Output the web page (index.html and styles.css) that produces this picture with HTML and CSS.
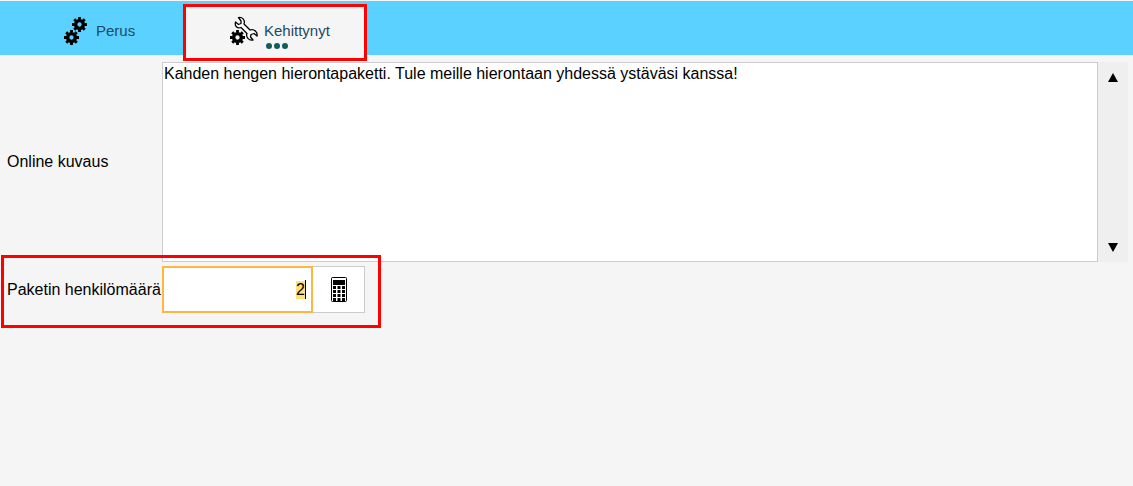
FILE: index.html
```html
<!DOCTYPE html>
<html lang="fi">
<head>
<meta charset="utf-8">
<title>Kehittynyt</title>
<link rel="stylesheet" href="styles.css">
</head>
<body>
<svg class="defs" aria-hidden="true">
  <symbol id="gear" viewBox="-8 -8 16 16">
    <g fill="none" stroke="#000">
      <circle r="4.1" stroke-width="3.6"/>
      <path stroke-width="3" d="M0-8V-5M0 8V5M-8 0H-5M8 0H5M-5.600-5.600-3.500-3.500M5.600 5.600 3.500 3.500M-5.600 5.600-3.500 3.500M5.600-5.600 3.500-3.500"/>
    </g>
  </symbol>
</svg>
<nav class="tabs">
  <button class="tab tab-basic" type="button">
    <svg class="tab-icon" viewBox="0 0 28 30" aria-hidden="true">
      <use href="#gear" x="10" y="1" width="15" height="15"/>
      <use href="#gear" x="2" y="14" width="15" height="15"/>
    </svg>
    <span class="tab-label">Perus</span>
  </button>
  <div class="tab-frame">
    <button class="tab tab-active" type="button">
      <svg class="tab-icon" viewBox="0 0 28 30" aria-hidden="true">
        <use href="#gear" x="0" y="14" width="15" height="15"/>
        <path fill="#fff" stroke="#000" stroke-width="1.3" stroke-linejoin="round" d="M8.500 1.500C12 .5 15.500 4 14 8L20 14C24 12.500 28 16 27 20L24 17.500 21 18.500 20.500 21 23 24C19 25 15.500 21 17 17.500L11 11.500C7 13 4.500 10 5.500 6L8.500 8.500 11 7.500 11 5Z"/>
      </svg>
      <span class="tab-label">Kehittynyt</span>
      <span class="dots" aria-hidden="true"><i></i><i></i><i></i></span>
    </button>
    <span class="marker"></span>
  </div>
</nav>
<main class="form">
  <label class="label" for="desc">Online kuvaus</label>
  <div class="editor">
    <textarea class="text" id="desc">Kahden hengen hierontapaketti. Tule meille hierontaan yhdessä ystäväsi kanssa!</textarea>
    <div class="scroll">
      <button class="arrow" type="button" aria-label="Ylös"><svg viewBox="0 0 10 9"><path d="M5 0 10 9H0Z"/></svg></button>
      <button class="arrow" type="button" aria-label="Alas"><svg viewBox="0 0 10 9"><path d="M0 0H10L5 9Z"/></svg></button>
    </div>
  </div>
  <div class="row">
    <label class="label" for="count">Paketin henkilömäärä</label>
    <div class="number">
      <div class="field"><input class="count" id="count" type="text" value="2"><span class="caret"></span></div>
      <button class="calc" type="button" aria-label="Laskin">
        <svg viewBox="0 0 16 25" aria-hidden="true">
          <rect x=".5" y=".5" width="15" height="24" rx="1" fill="#fff" stroke="#000"/>
          <path d="M2 3H14V8H2Z"/>
          <path stroke="#000" stroke-width="3" stroke-dasharray="3 1.500" d="M2 10.500H14M2 14.500H14M2 18.500H14M2 22.500H14"/>
        </svg>
      </button>
    </div>
    <span class="marker"></span>
  </div>
</main>
<script src="app.js"></script>
</body>
</html>
```
FILE: styles.css
```css
* { box-sizing: border-box; }
body {
  margin: 0;
  padding-top: 1px;
  background: #f5f5f5;
  color: #000;
  font: 16px/20px "Liberation Sans", Arial, sans-serif;
}
button, input, textarea { font: inherit; color: inherit; border: 0; border-radius: 0; padding: 0; }
.defs { position: absolute; width: 0; height: 0; }
.tabs { display: flex; height: 54px; background: #5bd1ff; }
.tab {
  position: relative;
  display: flex;
  align-items: center;
  gap: 6px;
  background: none;
  color: #1c4a66;
  font-size: 15px;
}
.tab-basic { width: 183px; padding: 6px 0 0 62px; }
.tab-icon { width: 28px; height: 30px; }
.tab-frame { position: relative; width: 184px; margin: 3px 0 -6px; }
.tab-active {
  width: 100%;
  height: 54px;
  margin-top: 2px;
  padding: 0 0 4px 47px;
  background: #f5f5f5;
}
.dots { position: absolute; left: 83px; bottom: 11px; display: flex; gap: 2px; }
.dots i { width: 6px; height: 6px; border-radius: 50%; background: #115e59; }
.marker { position: absolute; inset: 0; border: 3px solid #f00; pointer-events: none; }
.form {
  display: grid;
  grid-template-columns: 162px 1fr;
  align-items: center;
  padding: 7px 5px 0 0;
}
.label { padding-left: 7px; white-space: nowrap; }
.editor { display: flex; height: 200px; background: #efefef; }
.text {
  flex: 1;
  height: 100%;
  padding: 1px;
  border: 1px solid #ccc;
  background: #fff;
  resize: none;
  outline: none;
}
.scroll {
  display: flex;
  flex-direction: column;
  justify-content: space-between;
  width: 30px;
}
.arrow { height: 30px; background: none; }
.arrow svg { display: block; width: 10px; height: 9px; margin: auto; }
.row {
  position: relative;
  grid-column: 1 / -1;
  justify-self: start;
  display: grid;
  grid-template-columns: 162px auto;
  align-items: center;
  margin-top: -7px;
  padding: 11px 16px 15px 0;
}
.row .marker { left: 1px; }
.number { display: flex; height: 47px; }
.field { position: relative; width: 151px; }
.count {
  width: 100%;
  height: 100%;
  padding-right: 6px;
  border: 2px solid #ffb742;
  background: #fff;
  text-align: right;
  outline: none;
}
.count::selection { background: #ffe07a; color: #000; }
.caret { position: absolute; right: 7px; top: 14px; width: 1px; height: 19px; background: #000; }
.calc { width: 52px; border: 1px solid #ccc; border-left: 0; background: #fff; }
.calc svg { display: block; width: 16px; height: 25px; margin: auto; }
```
FILE: app.js
```js
const count = document.getElementById("count");
count.focus();
count.select();
```
